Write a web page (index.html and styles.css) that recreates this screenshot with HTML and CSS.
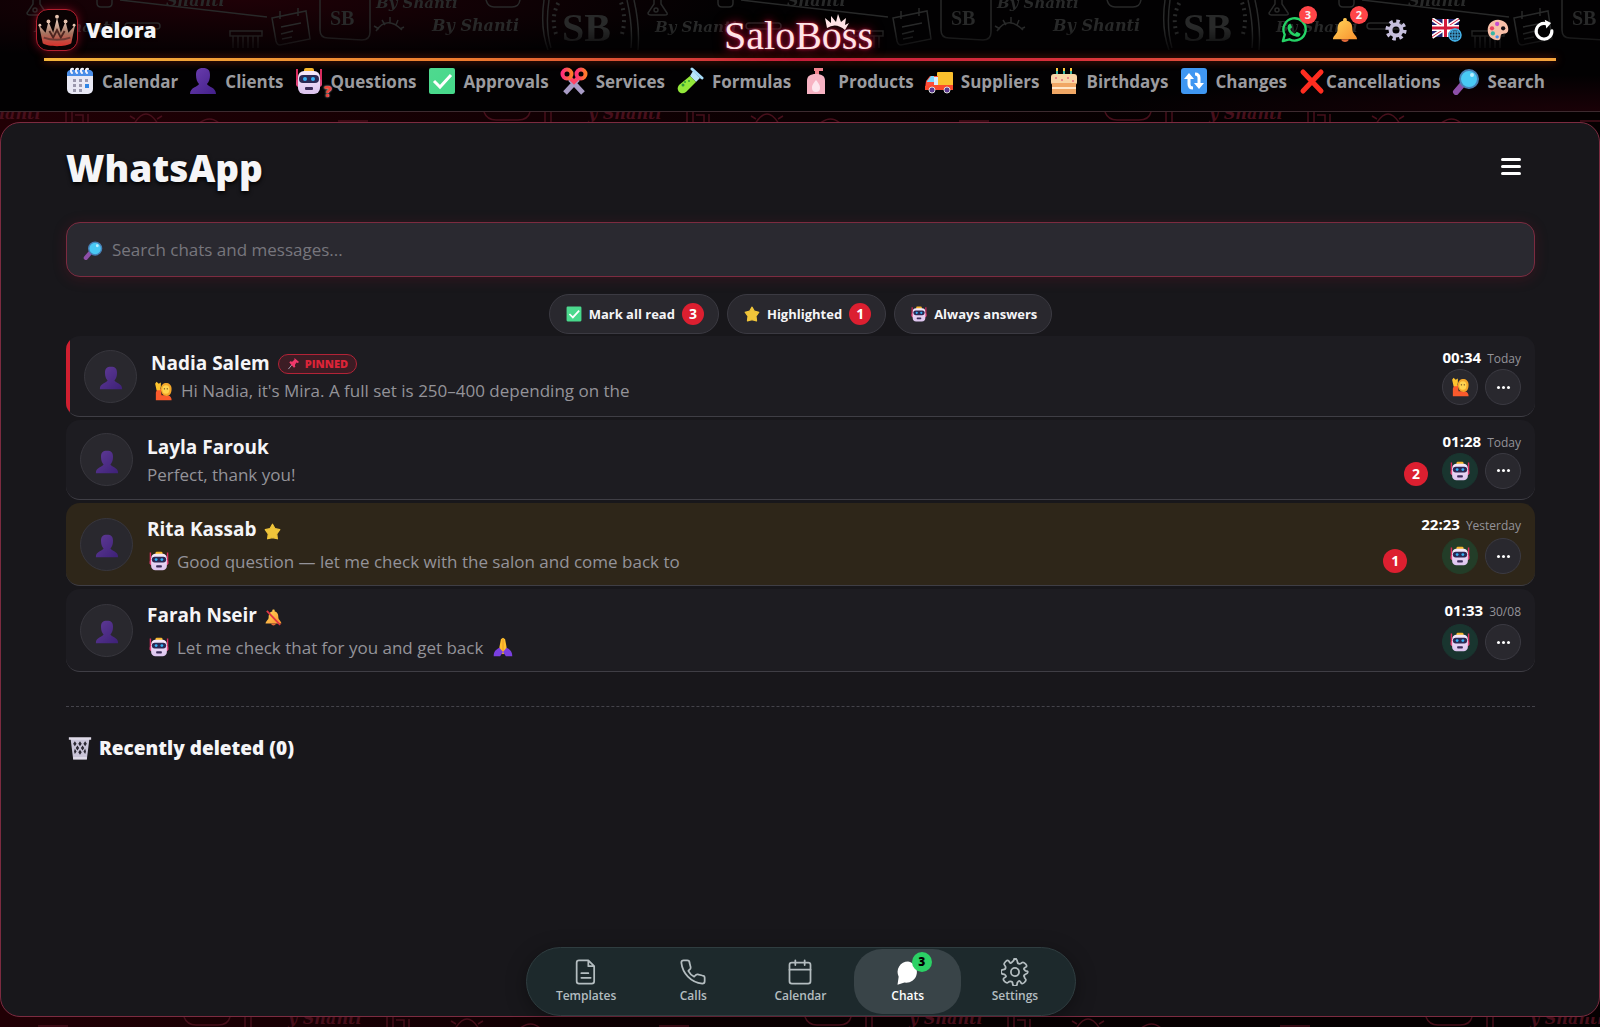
FILE: index.html
```html
<!DOCTYPE html>
<html lang="en">
<head>
<meta charset="utf-8">
<meta name="viewport" content="width=device-width, initial-scale=1">
<title>Velora – WhatsApp</title>
<link rel="stylesheet" href="styles.css">
</head>
<body>
<svg class="defs" width="0" height="0" aria-hidden="true">
  <defs>
    <linearGradient id="g-purple" x1="0" y1="0" x2="1" y2="1"><stop offset="0" stop-color="#6d3fb0"/><stop offset="1" stop-color="#43208a"/></linearGradient>
    <linearGradient id="g-green" x1="0" y1="0" x2="1" y2="1"><stop offset="0" stop-color="#4fd98f"/><stop offset="1" stop-color="#45d98a"/></linearGradient>
    <linearGradient id="g-bell" x1="0" y1="0" x2="1" y2="1"><stop offset="0" stop-color="#ffd75a"/><stop offset="1" stop-color="#f9922f"/></linearGradient>
    <linearGradient id="g-pink" x1="0" y1="0" x2="1" y2="0"><stop offset="0" stop-color="#ff2f7a"/><stop offset="1" stop-color="#ff7a2a"/></linearGradient>
    <linearGradient id="g-robot" x1="0" y1="0" x2="0" y2="1"><stop offset="0" stop-color="#f6e9fb"/><stop offset="1" stop-color="#dcc3ee"/></linearGradient>
    <linearGradient id="g-crown" x1="0" y1="0" x2="0" y2="1"><stop offset="0" stop-color="#f3dccd"/><stop offset=".55" stop-color="#a5735f"/><stop offset="1" stop-color="#d8302b"/></linearGradient>
  </defs>
  <symbol id="i-calendar" viewBox="0 0 28 28"><rect x="1" y="3" width="26" height="24" rx="5" fill="#e9e9f5"/><path d="M1 9V7a4 4 0 0 1 4-4h18a4 4 0 0 1 4 4v2z" fill="#4a8ee8"/><g stroke="#f3f3fb" stroke-width="2" fill="none" stroke-linecap="round"><path d="M6 6c-2-2-1-5 1-4M11 6c-2-2-1-5 1-4M16 6c-2-2-1-5 1-4M21 6c-2-2-1-5 1-4"/></g><g fill="#9b98ad"><rect x="7" y="12" width="3" height="3"/><rect x="13" y="12" width="3" height="3"/><rect x="19" y="12" width="3" height="3"/><rect x="7" y="17" width="3" height="3"/><rect x="13" y="17" width="3" height="3"/><rect x="7" y="22" width="3" height="3"/><rect x="13" y="22" width="3" height="3"/></g><rect x="19" y="17" width="4" height="4" fill="#2f86e6"/></symbol>
  <symbol id="i-person" viewBox="0 0 28 28"><path d="M7 8c0-5 2-7 7-7s7 2 7 7c0 4-1 7-3 9 1 3 9 3 9 10H1c0-7 8-7 9-10-2-2-3-5-3-9z" fill="url(#g-purple)"/></symbol>
  <symbol id="i-robot" viewBox="0 0 28 28"><path d="M2 2v16M26 2v16" stroke="#d82c5e" stroke-width="2"/><rect x="1" y="12" width="26" height="8" rx="3" fill="#e2477c"/><rect x="9" y="1" width="10" height="5" rx="2" fill="#f6b62c"/><rect x="3" y="4" width="22" height="23" rx="6" fill="url(#g-robot)"/><rect x="4" y="8" width="20" height="8" rx="4" fill="#2b2853"/><circle cx="10" cy="12" r="2" fill="#35b1f5"/><circle cx="18" cy="12" r="2" fill="#35b1f5"/><rect x="10" y="20" width="8" height="3" rx="1" fill="#3a2b58"/></symbol>
  <symbol id="i-check" viewBox="0 0 28 28"><rect x="1" y="1" width="26" height="26" rx="2" fill="url(#g-green)"/><path d="M6 14l6 6L23 8" fill="none" stroke="#fff" stroke-width="3"/></symbol>
  <symbol id="i-scissors" viewBox="0 0 28 28"><path d="M10 12l13 14M18 12L5 26" stroke="#a99cc6" stroke-width="5"/><path d="M10 11l4 4 4-4" fill="none" stroke="#ff4565" stroke-width="4"/><g fill="none" stroke="url(#g-pink)" stroke-width="4"><circle cx="7" cy="7" r="4.500"/><circle cx="21" cy="7" r="4.500"/></g></symbol>
  <symbol id="i-tube" viewBox="0 0 28 28"><path d="M14 9l3-5 7 7-4 4z" fill="#b9e6f8"/><path d="M3 18L14 9l6 6-10 10c-5 4-11-2-7-7z" fill="#93e83a"/><path d="M16 2l10 9" stroke="#a7dcf8" stroke-width="3" stroke-linecap="round"/><g fill="#2f9c3a"><circle cx="7" cy="18" r="1.500"/><circle cx="13" cy="14" r="1"/><circle cx="9" cy="15" r="1"/></g></symbol>
  <symbol id="i-bottle" viewBox="0 0 28 28"><path d="M12 1h9v3h-4v4h-4V4h-1z" fill="#f0838d"/><path d="M5 14c0-5 3-7 9-7s9 2 9 7v13H5z" fill="#f7b3c3"/><path d="M14 13c3 4 4 5 4 8a4 4 0 0 1-8 0c0-3 1-4 4-8z" fill="#fde6ee"/></symbol>
  <symbol id="i-truck" viewBox="0 0 28 28"><rect x="12" y="5" width="16" height="15" rx="1" fill="#fbc02d"/><path d="M1 14l4-5h8v13H0z" fill="#ff4d3a"/><path d="M2 14l4-5h3v6H2z" fill="#7ad9ff"/><path d="M9 10h4v8H9z" fill="#d9ecff"/><path d="M9 18h19v5H0v-4z" fill="#fa4a2c"/><g fill="#5c3a91" stroke="#ddd" stroke-width="1"><circle cx="7" cy="23" r="3"/><circle cx="22" cy="23" r="3"/></g></symbol>
  <symbol id="i-cake" viewBox="0 0 28 28"><path d="M7 8V3M14 8V3M21 8V3" stroke="#3fb9a0" stroke-width="2"/><path d="M7 4V1M14 4V1M21 4V1" stroke="#ffc840" stroke-width="2"/><rect x="1" y="7" width="26" height="11" rx="3" fill="#f9d5a6"/><rect x="2" y="16" width="24" height="11" fill="#f0a765"/><path d="M2 21h24" stroke="#ffe7c9" stroke-width="2"/><g fill="#e56f80"><circle cx="6" cy="11" r="1"/><circle cx="12" cy="13" r="1"/><circle cx="18" cy="11" r="1"/><circle cx="23" cy="14" r="1"/></g></symbol>
  <symbol id="i-arrows" viewBox="0 0 28 28"><rect x="1" y="1" width="26" height="26" rx="3" fill="#3f97f2"/><path d="M9 10v7c0 3 2 4 4 4M19 18v-7c0-3-2-4-4-4" fill="none" stroke="#fff" stroke-width="3"/><path d="M4 12l5-6 5 6zM14 16l5 6 5-6z" fill="#fff"/></symbol>
  <symbol id="i-cross" viewBox="0 0 28 28"><path d="M5 5l18 19M23 5L5 24" stroke="#ff2d20" stroke-width="5" stroke-linecap="round"/></symbol>
  <symbol id="i-lens" viewBox="0 0 28 28"><path d="M10 18l-6 7" stroke="#8d4fa8" stroke-width="6" stroke-linecap="round"/><circle cx="17" cy="12" r="9" fill="#49c9f5" stroke="#477fb5" stroke-width="2"/><circle cx="20" cy="8" r="2" fill="#b9efff"/></symbol>
  <symbol id="i-star" viewBox="0 0 28 28"><path d="M14 2l4 7 8 2-5 7 1 8-8-2-8 2 1-8-5-7 8-2z" fill="#f0c53a" stroke="#f0c53a" stroke-width="2" stroke-linejoin="round"/></symbol>
  <symbol id="i-bell" viewBox="0 0 28 28"><path d="M14 1c2 0 2 1 2 3 5 1 6 5 6 10 0 4 5 6 5 10H1c0-4 5-6 5-10C6 9 7 5 12 4c0-2 0-3 2-3z" fill="url(#g-bell)"/><path d="M10 24h8c0 4-8 4-8 0z" fill="#e06a3a"/></symbol>
  <symbol id="i-bell-off" viewBox="0 0 28 28"><use href="#i-bell"/><path d="M3 3l22 23" stroke="#e03543" stroke-width="3"/></symbol>
  <symbol id="i-hand" viewBox="0 0 28 28"><path d="M4 27V16l2-5h5l1 9h7c5 0 7 3 7 7z" fill="#fa5a2c"/><path d="M5 13L3 4l2-3 3 3 3-2v6l-1 5z" fill="#ffc42e"/><path d="M11 11c0-11 15-11 15 0 0 7-3 10-7 10s-8-3-8-10z" fill="#f4a72a"/><ellipse cx="18" cy="12" rx="5" ry="6" fill="#ffd34f"/><circle cx="16" cy="11" r="1" fill="#5b3b1c"/><circle cx="20" cy="11" r="1" fill="#5b3b1c"/></symbol>
  <symbol id="i-pray" viewBox="0 0 28 28"><path d="M8 20l3-17 3-2 3 2 3 17-6 4z" fill="#ffc02e"/><path d="M14 3v18" stroke="#e28a24" stroke-width="1"/><path d="M9 15l5 6-4 6H1c0-6 2-9 8-12zM19 15l-5 6 4 6h9c0-6-2-9-8-12z" fill="#7a3fe0"/></symbol>
  <symbol id="i-pin" viewBox="0 0 28 28"><path d="M3 26l9-11" stroke="#a9a3b8" stroke-width="2"/><path d="M16 2l10 9-3 2-3-1-3 5 1 4-3 2L5 12l2-3 4 1 5-4z" fill="#f0386b"/></symbol>
  <symbol id="i-trash" viewBox="0 0 28 28"><path d="M3 3h22l-3 24H6z" fill="#c9c4d8"/><g fill="#2b2833"><path d="M8 6l2 3-2 3-2-3zM14 6l2 3-2 3-2-3zM20 6l2 3-2 3-2-3zM11 11l2 3-2 3-2-3zM17 11l2 3-2 3-2-3zM8 15l2 3-2 3-1-3zM14 16l2 3-2 3-2-3zM20 15l1 3-1 3-2-3z"/></g><path d="M1 3h26M6 26h16" stroke="#dedae8" stroke-width="3"/></symbol>
  <symbol id="i-whatsapp" viewBox="0 0 28 28"><path d="M2 26l2-7A12 12 0 1 1 9 24z" fill="none" stroke="#25d366" stroke-width="2.500" stroke-linejoin="round"/><path d="M10 7l2 4-2 2c1 3 3 4 5 5l2-2 4 2c0 3-3 4-5 3-5-1-8-4-9-9 0-3 1-4 3-5z" fill="#25d366"/></symbol>
  <symbol id="i-gear" viewBox="0 0 28 28"><circle cx="14" cy="14" r="7" fill="none" stroke="#c6bfdd" stroke-width="5"/><circle cx="14" cy="14" r="11" fill="none" stroke="#c6bfdd" stroke-width="5" stroke-dasharray="4.320 4.320"/></symbol>
  <symbol id="i-flag" viewBox="0 0 30 24"><path d="M0 1h27v18H0z" fill="#20236f"/><path d="M0 1l27 18M27 1L0 19" stroke="#fff" stroke-width="4"/><path d="M0 1l27 18M27 1L0 19" stroke="#d31b3a" stroke-width="1"/><path d="M13.500 1v18M0 10h27" stroke="#fff" stroke-width="6"/><path d="M13.500 1v18M0 10h27" stroke="#d31b3a" stroke-width="3"/><circle cx="23" cy="17" r="6" fill="#123" stroke="#44b3ea" stroke-width="1.500"/><path d="M17 17h12M23 11v12M18 14h10M18 20h10" stroke="#44b3ea" stroke-width="1"/><ellipse cx="23" cy="17" rx="3" ry="6" fill="none" stroke="#44b3ea"/></symbol>
  <symbol id="i-palette" viewBox="0 0 28 28"><path d="M14 2C6 2 2 8 2 14c0 7 5 12 12 12 4 0 2-5 4-7s8 1 8-6C26 6 20 2 14 2z" fill="#f8bfa8"/><circle cx="13" cy="7" r="2.500" fill="#c54fd0"/><circle cx="7" cy="12" r="2.500" fill="#e8415e"/><circle cx="8" cy="18" r="2.500" fill="#37b6a5"/><circle cx="13" cy="22" r="2" fill="#4a90e8"/><circle cx="20" cy="12" r="2.500" fill="#151015"/></symbol>
  <symbol id="i-refresh" viewBox="0 0 28 28"><path d="M24 15a10 10 0 1 1-7-9" fill="none" stroke="#fff" stroke-width="4" stroke-linecap="round"/><path d="M15 1l8 4-6 7z" fill="#fff"/></symbol>
  <symbol id="crown" viewBox="0 0 40 34"><path d="M1 12l7 8 3-12 5 12 4-16 4 16 5-12 3 12 7-8-4 19c-6 4-24 4-30 0z" fill="url(#g-crown)"/><path d="M12 18l4 7 4-8 4 8 4-7" stroke="#4c241f" stroke-width="2" fill="none"/><path d="M6 25c8 3 20 3 28 0" stroke="#6d3a33" stroke-width="2" fill="none"/><g fill="#e8c4b0"><circle cx="20" cy="3" r="2"/><circle cx="11" cy="8" r="2"/><circle cx="29" cy="8" r="2"/><circle cx="2" cy="12" r="1.500"/><circle cx="38" cy="12" r="1.500"/></g></symbol>
  <symbol id="motif" viewBox="0 0 621 60" overflow="visible">
    <g fill="none" stroke="currentColor" stroke-width="1.500">
      <path d="M33 0v4l-6 9q0 2 3 2h14q3 0 2-2l-6-9V0"/><circle cx="35" cy="10" r="2"/>
      <path d="M97 0v3q0 4 4 4h7q4 0 4-4V0M120 0l147 17"/><rect x="125" y="23" width="35" height="6" rx="3"/>
      <path d="M230 31h32v5h-32zM233 36v12M238 36v12M243 36v12M248 36v12M253 36v12M258 36v12"/>
      <path d="M272 18l34-7 4 28-30 6q-3 0-4-4zM280 11v8M298 8v8M281 27l20-4M281 34l12-3M282 39l10-2"/>
      <path d="M320 0v30q0 8 8 8l34 2q8 0 8-8V0"/>
      <path d="M376 31q11-16 26-1M374 26l5 3M382 20l3 5M390 17v6M398 20l-2 5M404 27l-4 2M486 0q2 7 8 7h18q7 0 8-7"/>
      <path d="M544 0q-4 28 4 50M549 0q-4 28 2 48M627 0q6 26 4 48M634 0q6 26 4 50"/>
      <path d="M556 34q-6-18 4-34M622 34q5-18-2-34" stroke-width="4" stroke-dasharray="2 4"/>
    </g>
    <g fill="currentColor" font-family="Liberation Serif, serif" font-weight="700">
      <text x="330" y="25" font-size="20">SB</text>
      <text x="562" y="41" font-size="40">SB</text>
      <g font-family="DejaVu Serif, serif" font-style="italic"><text x="376" y="8" font-size="15">By Shanti</text><text x="432" y="31" font-size="16">By Shanti</text><text x="34" y="32" font-size="15">By Shanti</text><text x="166" y="6" font-size="16">Shanti</text></g>
    </g>
  </symbol>
  <symbol id="strip" viewBox="0 0 621 12" overflow="visible">
    <g fill="none" stroke="currentColor" stroke-width="1.500">
      <path d="M66 0v12M72 0v12M75 3h8v8h-8M88 2v10M134 12q12-20 24 0M130 4l5 3M162 4l-5 3M198 12q12-10 22 0M484 0q3 8 12 8h22q10 0 12-8M545 0v12M551 0v12M338 9h30"/>
    </g>
    <text x="588" y="7" font-family="DejaVu Serif, serif" font-weight="700" font-style="italic" font-size="16" fill="currentColor">y Shanti</text>
  </symbol>
</svg>

<header class="header">
  <svg class="header__pattern" aria-hidden="true"><use href="#motif" x="0" width="621" height="60"/><use href="#motif" x="621" width="621" height="60"/><use href="#motif" x="1242" width="621" height="60"/></svg>
  <div class="topbar">
    <a class="brand" href="#"><span class="brand__mark"><svg width="38" height="34" aria-hidden="true"><use href="#crown"/></svg></span>Velora</a>
    <div class="logo">SaloBoss<svg class="logo__crown" viewBox="0 0 26 18" aria-hidden="true"><path d="M1 5l6 5V3l5 6 2-8 3 8 5-4-1 7 4-2-4 7Q12 9 3 15z" fill="#ffe3e6"/></svg></div>
    <div class="tools">
      <button class="tool" aria-label="WhatsApp"><svg width="26" height="26"><use href="#i-whatsapp"/></svg><span class="tool__badge">3</span></button>
      <button class="tool" aria-label="Notifications"><svg width="26" height="26"><use href="#i-bell"/></svg><span class="tool__badge">2</span></button>
      <button class="tool" aria-label="Settings"><svg width="22" height="22"><use href="#i-gear"/></svg></button>
      <button class="tool" aria-label="Language"><svg width="30" height="24"><use href="#i-flag"/></svg></button>
      <button class="tool" aria-label="Theme"><svg width="24" height="24"><use href="#i-palette"/></svg></button>
      <button class="tool tool--small" aria-label="Refresh"><svg width="22" height="22"><use href="#i-refresh"/></svg></button>
    </div>
  </div>
  <div class="rule"></div>
  <nav class="nav" aria-label="Main">
    <a href="#"><svg><use href="#i-calendar"/></svg>Calendar</a>
    <a href="#"><svg><use href="#i-person"/></svg>Clients</a>
    <a href="#"><span class="nav__robot"><svg><use href="#i-robot"/></svg><b>?</b></span>Questions</a>
    <a href="#"><svg><use href="#i-check"/></svg>Approvals</a>
    <a href="#"><svg><use href="#i-scissors"/></svg>Services</a>
    <a href="#"><svg><use href="#i-tube"/></svg>Formulas</a>
    <a href="#"><svg><use href="#i-bottle"/></svg>Products</a>
    <a href="#"><svg><use href="#i-truck"/></svg>Suppliers</a>
    <a href="#"><svg><use href="#i-cake"/></svg>Birthdays</a>
    <a href="#"><svg><use href="#i-arrows"/></svg>Changes</a>
    <a href="#" class="nav__tight"><svg><use href="#i-cross"/></svg>Cancellations</a>
    <a href="#"><svg><use href="#i-lens"/></svg>Search</a>
  </nav>
</header>
<svg class="strip" aria-hidden="true"><use href="#strip" x="-621" width="621" height="12"/><use href="#strip" x="0" width="621" height="12"/><use href="#strip" x="621" width="621" height="12"/><use href="#strip" x="1242" width="621" height="12"/></svg>

<main class="panel">
  <div class="panel__head">
    <h1>WhatsApp</h1>
    <button class="burger" aria-label="Menu"><span></span><span></span><span></span></button>
  </div>
  <label class="search">
    <svg width="20" height="20" aria-hidden="true"><use href="#i-lens"/></svg>
    <input type="search" placeholder="Search chats and messages..." aria-label="Search chats and messages">
  </label>
  <div class="chips">
    <button class="chip"><svg><use href="#i-check"/></svg>Mark all read<span class="count count--chip">3</span></button>
    <button class="chip"><svg><use href="#i-star"/></svg>Highlighted<span class="count count--chip">1</span></button>
    <button class="chip"><svg><use href="#i-robot"/></svg>Always answers</button>
  </div>

  <ul class="chats">
    <li class="chat chat--pinned">
      <span class="avatar"><svg><use href="#i-person"/></svg></span>
      <div class="chat__body">
        <div class="chat__name">Nadia Salem<span class="pinned"><svg><use href="#i-pin"/></svg>PINNED</span></div>
        <div class="chat__preview"><svg><use href="#i-hand"/></svg>Hi Nadia, it's Mira. A full set is 250–400 depending on the</div>
      </div>
      <div class="chat__meta">
        <div class="chat__time"><b>00:34</b>Today</div>
        <div class="chat__actions"><button class="round" aria-label="Human replies"><svg><use href="#i-hand"/></svg></button><button class="round" aria-label="More"><i></i><i></i><i></i></button></div>
      </div>
    </li>
    <li class="chat">
      <span class="avatar"><svg><use href="#i-person"/></svg></span>
      <div class="chat__body">
        <div class="chat__name">Layla Farouk</div>
        <div class="chat__preview">Perfect, thank you!<span class="count">2</span></div>
      </div>
      <div class="chat__meta">
        <div class="chat__time"><b>01:28</b>Today</div>
        <div class="chat__actions"><button class="round round--bot" aria-label="Bot replies"><svg><use href="#i-robot"/></svg></button><button class="round" aria-label="More"><i></i><i></i><i></i></button></div>
      </div>
    </li>
    <li class="chat chat--tall chat--gold">
      <span class="avatar"><svg><use href="#i-person"/></svg></span>
      <div class="chat__body">
        <div class="chat__name">Rita Kassab<svg><use href="#i-star"/></svg></div>
        <div class="chat__preview"><svg><use href="#i-robot"/></svg>Good question — let me check with the salon and come back to<span class="count">1</span></div>
      </div>
      <div class="chat__meta">
        <div class="chat__time"><b>22:23</b>Yesterday</div>
        <div class="chat__actions"><button class="round round--bot" aria-label="Bot replies"><svg><use href="#i-robot"/></svg></button><button class="round" aria-label="More"><i></i><i></i><i></i></button></div>
      </div>
    </li>
    <li class="chat chat--tall">
      <span class="avatar"><svg><use href="#i-person"/></svg></span>
      <div class="chat__body">
        <div class="chat__name">Farah Nseir<svg><use href="#i-bell-off"/></svg></div>
        <div class="chat__preview"><svg><use href="#i-robot"/></svg>Let me check that for you and get back<svg><use href="#i-pray"/></svg></div>
      </div>
      <div class="chat__meta">
        <div class="chat__time"><b>01:33</b>30/08</div>
        <div class="chat__actions"><button class="round round--bot" aria-label="Bot replies"><svg><use href="#i-robot"/></svg></button><button class="round" aria-label="More"><i></i><i></i><i></i></button></div>
      </div>
    </li>
  </ul>

  <section class="deleted">
    <h2><svg width="24" height="24" aria-hidden="true"><use href="#i-trash"/></svg>Recently deleted (0)</h2>
  </section>

  <nav class="dock" aria-label="WhatsApp sections">
    <a href="#"><svg viewBox="0 0 24 24"><path d="M6 2h8l5 5v13a2 2 0 0 1-2 2H6a2 2 0 0 1-2-2V4a2 2 0 0 1 2-2zM14 2v5h5M8 13h6M8 17h8"/></svg>Templates</a>
    <a href="#"><svg viewBox="0 0 24 24"><path d="M22 17v3a2 2 0 0 1-2 2C10 21 3 13 2 4a2 2 0 0 1 2-2h3a2 2 0 0 1 2 2l1 4a2 2 0 0 1-1 2l-1 1c1 2 3 4 5 5l1-1a2 2 0 0 1 2-1l4 1a2 2 0 0 1 2 2z"/></svg>Calls</a>
    <a href="#"><svg viewBox="0 0 24 24"><rect x="3" y="4" width="18" height="18" rx="2"/><path d="M8 2v4M16 2v4M3 10h18"/></svg>Calendar</a>
    <a href="#" class="is-active" aria-current="page"><span class="dock__icon"><svg viewBox="0 0 24 24"><path d="M12 3a9 9 0 1 1-3 18l-6 2 1-7a9 9 0 0 1 8-13z" fill="currentColor" stroke="none"/></svg><span class="dock__badge">3</span></span>Chats</a>
    <a href="#"><svg viewBox="0 0 24 24"><circle cx="12" cy="12" r="3.500"/><path d="M12 1q2 0 2 2t2 2q1 0 2-1t3 1 0 3-1 2 1 1q2 0 2 1t-2 2-1 2q0 1 1 2t-1 3-3 0-2-1-1 1q0 3-2 3t-2-2-2-2q-1 0-2 1t-3-1 0-3 1-2-1-1q-3 0-3-2t2-2 2-2q0-1-1-2t1-3 3 0 2 1 2-2q0-2 2-2z"/></svg>Settings</a>
  </nav>
</main>
<svg class="strip" aria-hidden="true"><use href="#strip" x="-300" width="621" height="12"/><use href="#strip" x="321" width="621" height="12"/><use href="#strip" x="942" width="621" height="12"/><use href="#strip" x="1563" width="621" height="12"/></svg>
</body>
</html>
```
FILE: styles.css
```css
* { box-sizing: border-box; }

body {
  margin: 0;
  min-height: 100vh;
  display: flex;
  flex-direction: column;
  background: linear-gradient(90deg, #210005, #0b0002 50%, #050001 85%);
  color: #f5f5f7;
  font-family: "Open Sans", "Noto Sans", sans-serif;
}

a { color: inherit; text-decoration: none; }
button { font: inherit; color: inherit; border: 0; padding: 0; background: none; cursor: pointer; }
svg { flex: none; display: block; }
.defs { position: absolute; }
.strip { width: 100%; height: 10px; overflow: hidden; color: #470f1b; }

/* Header */
.header {
  position: relative;
  height: 112px;
  border-bottom: 1px solid #3d2a2f;
  background:
    radial-gradient(500px 60px at 240px 0, rgba(60, 0, 12, .5), transparent),
    radial-gradient(500px 36px at 100% 100%, rgba(50, 0, 12, .5), transparent),
    #020102;
}
.header__pattern {
  position: absolute;
  inset: 0 0 auto 0;
  width: 100%;
  height: 56px;
  overflow: hidden;
  color: #282929;
  -webkit-mask-image: linear-gradient(#000 50%, transparent);
  mask-image: linear-gradient(#000 50%, transparent);
}
.topbar {
  position: relative;
  height: 58px;
  padding: 2px 43px 0 36px;
  display: grid;
  grid-template-columns: 1fr auto 1fr;
  align-items: center;
}
.brand {
  display: flex;
  align-items: center;
  gap: 8px;
  font-size: 21px;
  font-weight: 800;
  text-shadow: 0 1px 3px #000;
}
.brand__mark {
  width: 42px;
  height: 42px;
  display: grid;
  place-items: center;
  border: 1px solid #b3202f;
  border-radius: 12px;
  background: #0a0203;
  box-shadow: 0 0 8px rgba(220, 20, 50, .5);
}
.logo {
  position: relative;
  padding: 12px 0 0 4px;
  font: 40px/44px "Liberation Serif", serif;
  color: #ffe3e6;
  text-shadow: 0 0 3px #c81e44, 0 0 8px #a00d2c, 0 0 14px #6a081d;
}
.logo__crown {
  position: absolute;
  left: 104px;
  top: 11px;
  width: 26px;
  height: 18px;
}
.tools { display: flex; justify-content: flex-end; align-items: center; gap: 15px; }
.tool { position: relative; width: 36px; height: 36px; display: grid; place-items: center; }
.tool--small { width: 26px; }
.tool__badge {
  position: absolute;
  top: -6px;
  right: -5px;
  width: 18px;
  height: 18px;
  border-radius: 9px;
  background: #ff4548;
  font-size: 11px;
  font-weight: 700;
  line-height: 18px;
}
.rule {
  height: 3px;
  margin: 0 44px;
  background: linear-gradient(90deg, #f5b73c, #ee7a2e 28%, #c81e3c 50%, #d8303a 68%, #f5a53c);
  box-shadow: 0 0 8px rgba(230, 60, 20, .6);
}
.nav {
  position: relative;
  height: 40px;
  padding: 0 55px 0 66px;
  display: flex;
  justify-content: space-between;
  align-items: center;
  font-size: 17px;
  font-weight: 700;
  color: #9b9b9f;
}
.nav a { display: flex; align-items: center; gap: 8px; white-space: nowrap; }
.nav svg { width: 28px; height: 28px; }
.nav .nav__tight { gap: 0; }
.nav__robot { position: relative; }
.nav__robot b {
  position: absolute;
  right: -9px;
  bottom: -4px;
  color: #f04438;
  font-size: 15px;
  line-height: 16px;
  text-shadow: 0 0 2px #fff;
}

/* Panel */
.panel {
  flex: 1;
  padding: 0 64px 0 65px;
  display: flex;
  flex-direction: column;
  border: 1px solid #7c2b40;
  border-radius: 20px;
  background: #18171b;
}
.panel__head {
  height: 99px;
  padding: 0 14px 9px 0;
  display: flex;
  justify-content: space-between;
  align-items: center;
}
h1 { margin: 0; font-size: 37px; line-height: 48px; font-weight: 800; text-shadow: 0 2px 4px #000; }
.burger { width: 20px; margin-bottom: 4px; display: grid; gap: 4px; }
.burger span { height: 3px; border-radius: 2px; background: #fff; }

.search {
  height: 55px;
  padding: 0 16px;
  display: flex;
  align-items: center;
  gap: 9px;
  border: 1px solid #7c2b40;
  border-radius: 14px;
  background: #2a2930;
  box-shadow: 0 2px 14px rgba(150, 20, 45, .22);
}
.search input {
  flex: 1;
  min-width: 0;
  border: 0;
  outline: 0;
  padding: 0;
  background: none;
  color: #fff;
  font: 17px/24px "Open Sans", sans-serif;
}
.search input::placeholder { color: #77767d; opacity: 1; }

.chips { display: flex; justify-content: center; gap: 8px; margin-top: 17px; }
.chip {
  height: 40px;
  padding: 0 14px 0 16px;
  display: flex;
  align-items: center;
  gap: 7px;
  border: 1px solid #3b3a42;
  border-radius: 20px;
  background: #29282e;
  font-size: 13px;
  font-weight: 700;
}
.chip svg { width: 16px; height: 16px; }
.count {
  width: 24px;
  height: 24px;
  border-radius: 12px;
  background: #dc1f30;
  color: #fff;
  font-size: 14px;
  font-weight: 700;
  line-height: 24px;
  text-align: center;
}
.count--chip { width: 22px; height: 22px; line-height: 22px; }

/* Chat list */
.chats { list-style: none; margin: 2px 0 0; padding: 0; display: grid; gap: 3px; }
.chat {
  position: relative;
  height: 80px;
  padding: 0 14px;
  display: flex;
  align-items: center;
  overflow: hidden;
  border-bottom: 1px solid #3f3e45;
  border-radius: 14px;
  background: #1d1c21;
}
.chat--pinned { height: 81px; padding-left: 18px; }
.chat--pinned::before { content: ""; position: absolute; inset: 0 auto 0 0; width: 4px; background: #d01f30; }
.chat--tall { height: 83px; }
.chat--gold { background: #2e2619; }
.avatar {
  width: 53px;
  height: 53px;
  margin-right: 14px;
  display: grid;
  place-items: center;
  border: 1px solid #38373e;
  border-radius: 50%;
  background: #29282e;
}
.avatar svg { width: 24px; height: 24px; margin-top: 4px; opacity: .8; }
.chat__body { flex: 1; min-width: 0; padding-top: 2px; }
.chat__name, .chat__preview { display: flex; align-items: center; gap: 8px; line-height: 27px; white-space: nowrap; }
.chat__name { font-size: 19px; font-weight: 700; }
.chat__preview { color: #949399; font-size: 17px; }
.chat--tall .chat__preview { margin-top: 5px; }
.chat__name svg { width: 17px; height: 17px; margin-top: 4px; }
.chat__preview svg { width: 20px; height: 20px; margin-left: 2px; }
.chat__preview .count { margin-left: auto; margin-right: 14px; }
.pinned {
  height: 20px;
  padding: 0 8px;
  display: flex;
  align-items: center;
  gap: 5px;
  border: 1px solid #b32337;
  border-radius: 10px;
  background: #3c1c24;
  color: #dc2438;
  font-size: 11px;
  font-weight: 800;
}
.chat__name .pinned svg { width: 13px; height: 13px; margin: 0; }
.chat__meta { display: flex; flex-direction: column; align-items: flex-end; }
.chat--tall .chat__meta { gap: 2px; }
.chat__time { display: flex; align-items: baseline; gap: 6px; color: #949399; font-size: 12px; line-height: 20px; }
.chat__time b { color: #fff; font-size: 15px; }
.chat__actions { display: flex; gap: 7px; }
.round {
  width: 36px;
  height: 36px;
  display: flex;
  align-items: center;
  justify-content: center;
  gap: 2px;
  border: 1px solid #3b3a42;
  border-radius: 18px;
  background: #29282e;
}
.round svg { width: 20px; height: 20px; }
.round i { width: 3px; height: 3px; border-radius: 2px; background: #fff; }
.round--bot { border-color: #19352f; background: #19352f; }
.chat--gold .round--bot { border-color: #233d28; background: #233d28; }

.deleted { margin-top: 34px; padding-top: 26px; border-top: 1px dashed #44434a; }
.deleted h2 { margin: 0; display: flex; align-items: center; gap: 7px; padding-left: 2px; font-size: 19px; line-height: 30px; font-weight: 800; }

/* Bottom dock */
.dock {
  width: 550px;
  max-width: 100%;
  height: 69px;
  margin: auto auto 0;
  padding: 1px 6px;
  display: grid;
  grid-template-columns: repeat(5, 1fr);
  border: 1px solid #2f3d40;
  border-radius: 35px;
  background: #1d292c;
  box-shadow: 0 4px 20px rgba(0, 0, 0, .35);
  color: #b4bdc0;
  font-size: 12px;
  font-weight: 600;
  line-height: 18px;
}
.dock a { display: flex; flex-direction: column; align-items: center; justify-content: center; gap: 1px; border-radius: 28px; }
.dock svg { width: 28px; height: 28px; fill: none; stroke: currentColor; stroke-width: 1.500; stroke-linecap: round; stroke-linejoin: round; }
.dock .is-active { background: #394448; color: #fff; }
.dock__icon { position: relative; }
.dock__badge {
  position: absolute;
  left: 18px;
  top: -6px;
  width: 20px;
  height: 20px;
  border-radius: 10px;
  background: #2bd165;
  color: #000;
  font-weight: 800;
  line-height: 20px;
  text-align: center;
}
```
